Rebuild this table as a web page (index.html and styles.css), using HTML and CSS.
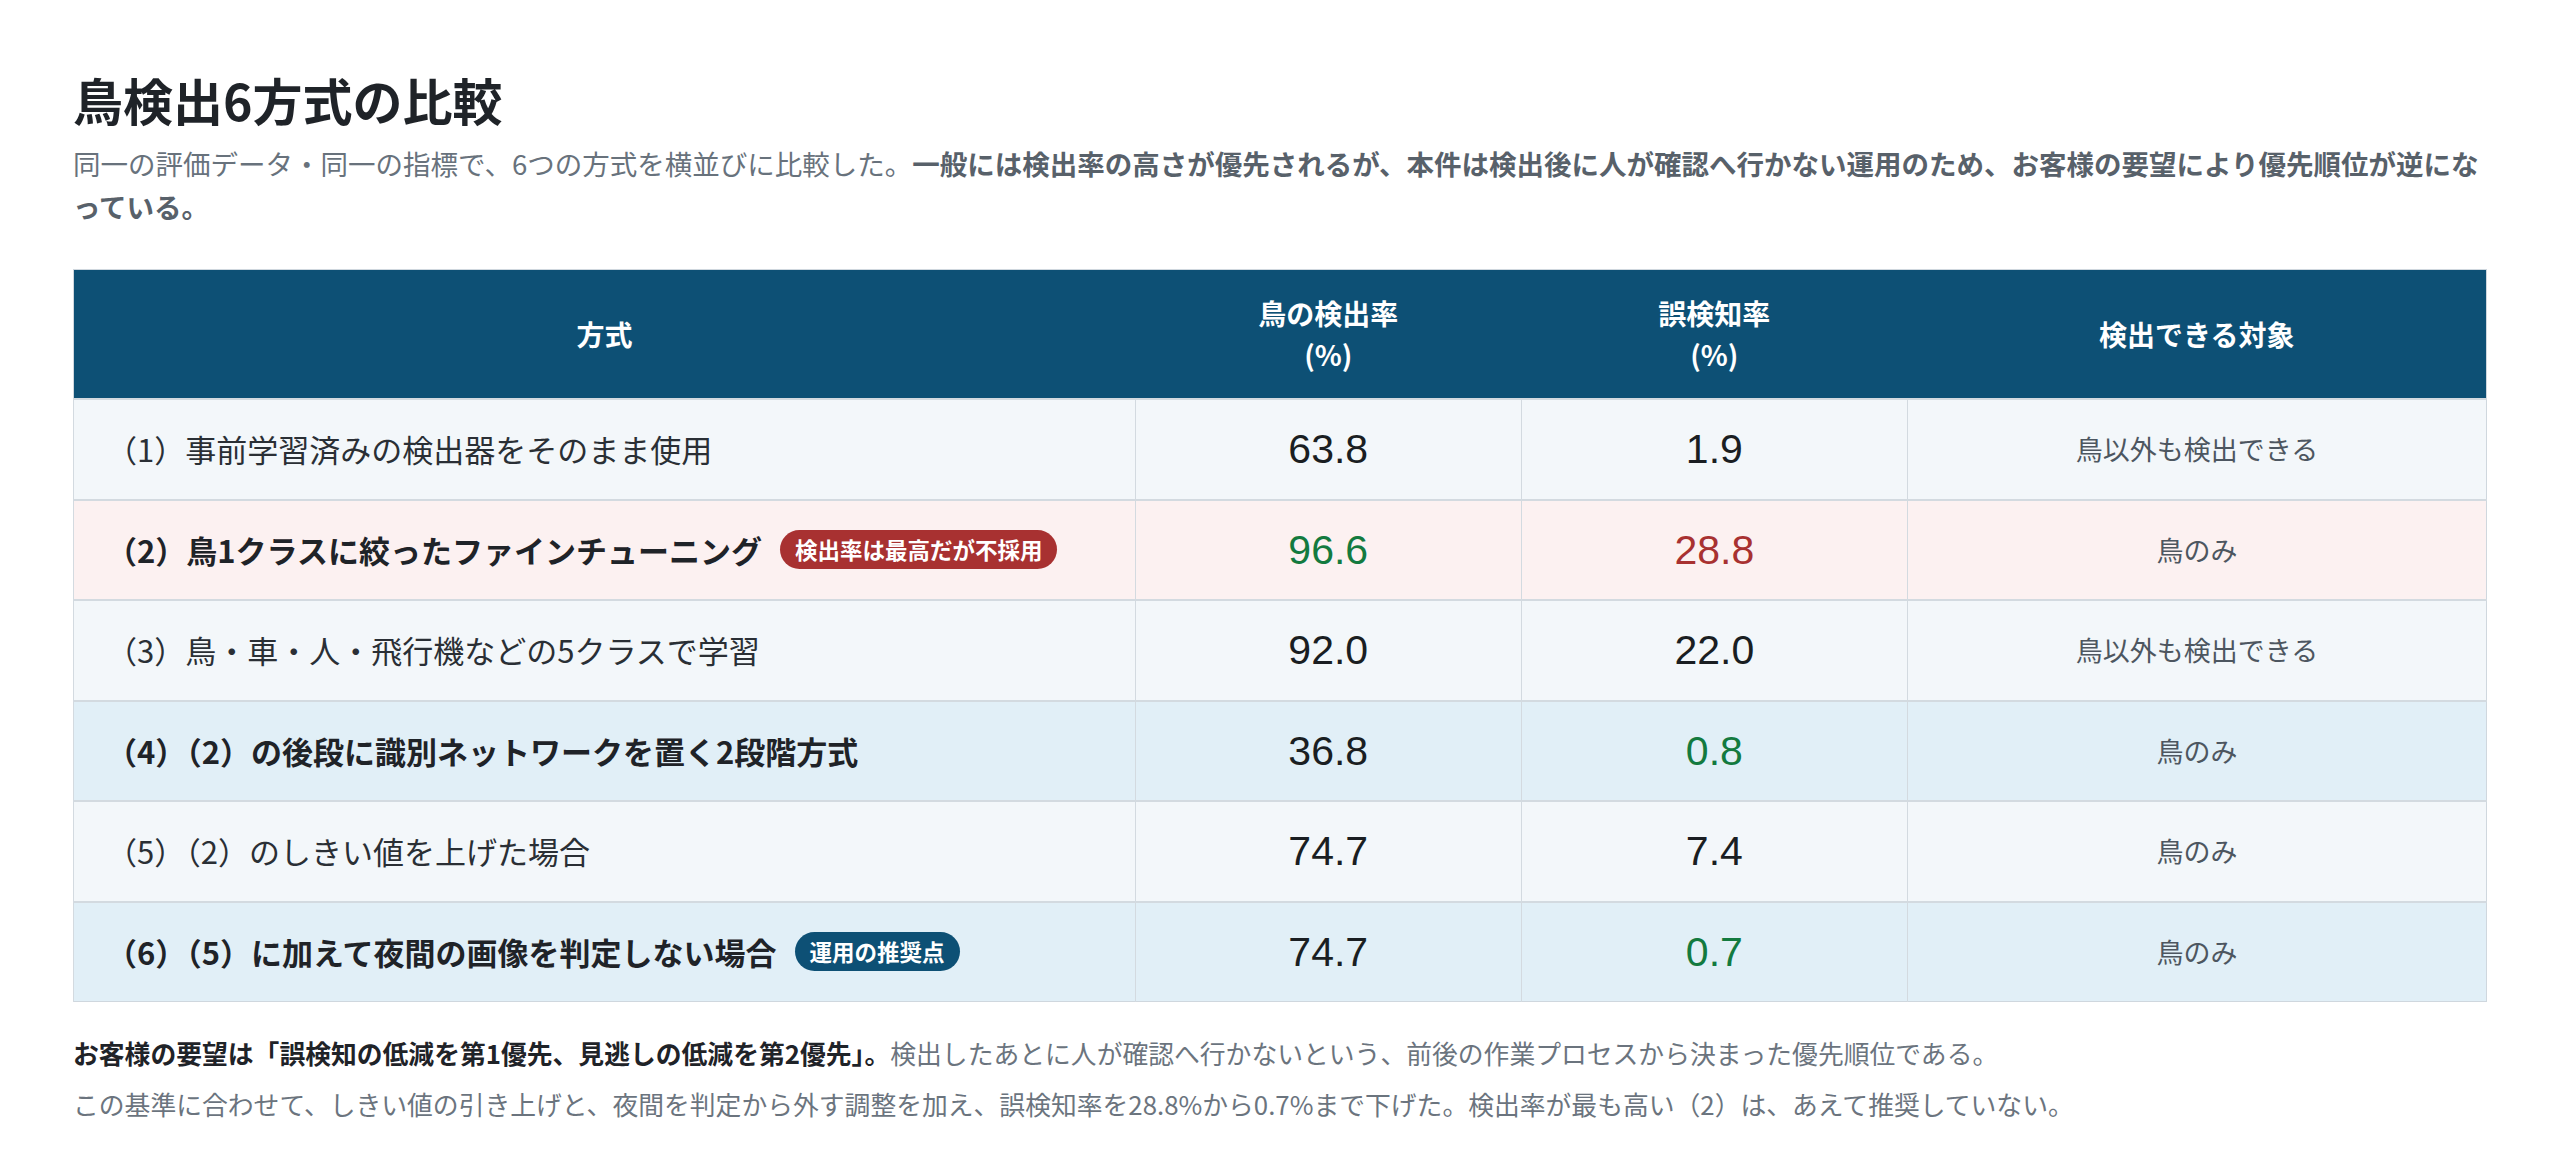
FILE: index.html
```html
<!DOCTYPE html>
<html lang="ja">
<head>
<meta charset="utf-8">
<title>鳥検出6方式の比較</title>
<link rel="stylesheet" href="styles.css">
</head>
<body>
<main class="page">
  <h1 class="title">鳥検出6方式の比較</h1>
  <p class="lead">同一の評価データ・同一の指標で、6つの方式を横並びに比較した。<strong>一般には検出率の高さが優先されるが、本件は検出後に人が確認へ行かない運用のため、お客様の要望により優先順位が逆になっている。</strong></p>

  <table class="cmp">
    <colgroup>
      <col class="c-method">
      <col class="c-num">
      <col class="c-num">
      <col class="c-target">
    </colgroup>
    <thead>
      <tr>
        <th>方式</th>
        <th>鳥の検出率<br>(%)</th>
        <th>誤検知率<br>(%)</th>
        <th>検出できる対象</th>
      </tr>
    </thead>
    <tbody>
      <tr class="row-plain">
        <td class="method">（1）事前学習済みの検出器をそのまま使用</td>
        <td class="num">63.8</td>
        <td class="num">1.9</td>
        <td class="target">鳥以外も検出できる</td>
      </tr>
      <tr class="row-warn">
        <td class="method strong"><span class="m-wrap">（2）鳥1クラスに絞ったファインチューニング<span class="badge badge-red">検出率は最高だが不採用</span></span></td>
        <td class="num good">96.6</td>
        <td class="num bad">28.8</td>
        <td class="target">鳥のみ</td>
      </tr>
      <tr class="row-plain">
        <td class="method">（3）鳥・車・人・飛行機などの5クラスで学習</td>
        <td class="num">92.0</td>
        <td class="num">22.0</td>
        <td class="target">鳥以外も検出できる</td>
      </tr>
      <tr class="row-focus">
        <td class="method strong">（4）（2）の後段に識別ネットワークを置く2段階方式</td>
        <td class="num">36.8</td>
        <td class="num good">0.8</td>
        <td class="target">鳥のみ</td>
      </tr>
      <tr class="row-plain">
        <td class="method">（5）（2）のしきい値を上げた場合</td>
        <td class="num">74.7</td>
        <td class="num">7.4</td>
        <td class="target">鳥のみ</td>
      </tr>
      <tr class="row-focus">
        <td class="method strong"><span class="m-wrap">（6）（5）に加えて夜間の画像を判定しない場合<span class="badge badge-blue">運用の推奨点</span></span></td>
        <td class="num">74.7</td>
        <td class="num good">0.7</td>
        <td class="target">鳥のみ</td>
      </tr>
    </tbody>
  </table>

  <div class="notes">
    <p><strong>お客様の要望は「誤検知の低減を第1優先、見逃しの低減を第2優先」。</strong>検出したあとに人が確認へ行かないという、前後の作業プロセスから決まった優先順位である。</p>
    <p>この基準に合わせて、しきい値の引き上げと、夜間を判定から外す調整を加え、誤検知率を28.8%から0.7%まで下げた。検出率が最も高い（2）は、あえて推奨していない。</p>
  </div>
</main>
</body>
</html>
```

FILE: styles.css
```css
html, body {
  margin: 0;
  padding: 0;
  background: #ffffff;
}

body {
  font-family: "Noto Sans CJK JP", "Noto Sans", sans-serif;
  color: #1f2328;
}

.page {
  padding: 64px 73px 40px;
}

.title {
  margin: 0;
  font-size: 50px;
  line-height: 70px;
  font-weight: 700;
  color: #1f2328;
}

.lead {
  margin: 8px 0 0;
  font-size: 27.5px;
  line-height: 43px;
  color: #68727c;
}

.lead strong {
  font-weight: 700;
  color: #58616a;
}

.cmp {
  width: 100%;
  margin-top: 41px;
  border-collapse: collapse;
  table-layout: fixed;
  border: 1px solid #cfd7de;
}

.c-method { width: 44%; }
.c-num { width: 16%; }
.c-target { width: 24%; }

.cmp th {
  background: #0d5075;
  color: #ffffff;
  font-size: 28px;
  line-height: 41px;
  font-weight: 700;
  padding: 23px 16px;
  text-align: center;
  border: 0;
}

.cmp td {
  height: 98.5px;
  padding: 0 32px;
  border-top: 2px solid #d3dae0;
  border-left: 1px solid #d3dae0;
  text-align: center;
  vertical-align: middle;
}

.row-plain td { background: #f3f7fa; }
.row-warn td { background: #fcf1f1; }
.row-focus td { background: #e1eff7; }

.cmp td.method {
  text-align: left;
  font-size: 31px;
  line-height: 44px;
  color: #2a2f35;
  font-weight: 400;
}

.cmp td.method.strong {
  font-weight: 700;
  color: #1f2328;
}

.m-wrap {
  display: inline-flex;
  align-items: center;
  gap: 18px;
}

.badge {
  display: inline-block;
  font-size: 22.5px;
  line-height: 31px;
  padding: 4px 15px;
  border-radius: 999px;
  color: #ffffff;
  font-weight: 700;
}

.badge-red { background: #a83131; }
.badge-blue { background: #0d5075; }

.cmp td.num {
  font-family: "Liberation Sans", "Noto Sans CJK JP", sans-serif;
  font-size: 41px;
  line-height: 52px;
  font-weight: 400;
  color: #1a1e22;
}

.cmp td.num.good { color: #137a3f; }
.cmp td.num.bad { color: #a83131; }

.cmp td.target {
  font-size: 27px;
  line-height: 40px;
  color: #4d5660;
}

.notes {
  margin-top: 25px;
}

.notes p {
  margin: 0;
  font-size: 25.8px;
  line-height: 51px;
  color: #6b747e;
}

.notes strong {
  font-weight: 700;
  color: #1f2328;
}
```
